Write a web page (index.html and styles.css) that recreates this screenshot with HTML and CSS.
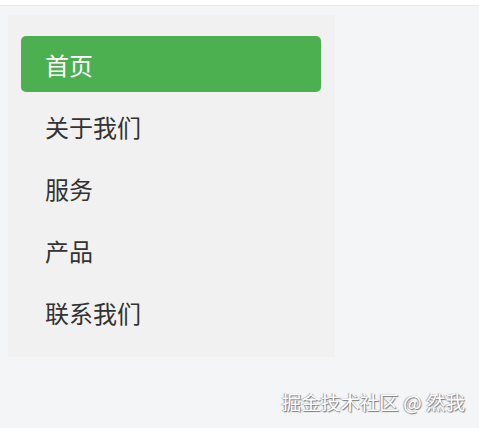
FILE: index.html
```html
<!DOCTYPE html>
<html lang="zh">
<head>
<meta charset="utf-8">
<link rel="stylesheet" href="styles.css">
</head>
<body>
<div class="topbar"></div>
<main class="page">
  <nav class="sidebar">
    <a class="item active">首页</a>
    <a class="item">关于我们</a>
    <a class="item">服务</a>
    <a class="item">产品</a>
    <a class="item">联系我们</a>
  </nav>
  <div class="watermark">掘金技术社区 @ 然我</div>
</main>
</body>
</html>
```
FILE: styles.css
```css
html, body {
  margin: 0;
  padding: 0;
  height: 100%;
}
body {
  font-family: "Noto Sans CJK SC", "Noto Sans", sans-serif;
  background: #f4f5f7;
  display: flex;
  flex-direction: column;
}
.topbar {
  height: 5px;
  background: #ffffff;
  border-bottom: 1px solid #e6e7ea;
}
.page {
  flex: 1;
  display: flex;
  flex-direction: column;
  padding: 9px 0 0 8px;
}
.sidebar {
  width: 300px;
  padding: 21px 14px 17px 13px;
  background: #f1f1f1;
  display: flex;
  flex-direction: column;
  gap: 6px;
}
.item {
  height: 56px;
  display: flex;
  align-items: center;
  padding-left: 24px;
  font-size: 24px;
  color: #333333;
  border-radius: 5px;
}
.item.active {
  background: #4caf50;
  color: #ffffff;
}
.watermark {
  margin-top: auto;
  align-self: flex-end;
  margin-right: 14px;
  margin-bottom: 12px;
  font-size: 19.5px;
  color: #ffffff;
  text-shadow: 1px 1px 1px #7a7a7a, -1px 0 1px #a0a0a0;
}
```
